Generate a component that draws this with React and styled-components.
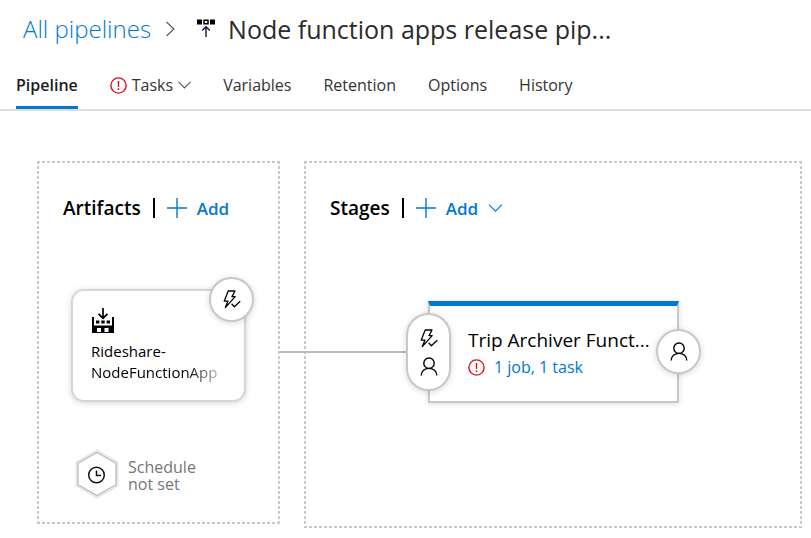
import React from "react";
import styled, { createGlobalStyle } from "styled-components";

const BLUE = "#0078d4";
const RED = "#e00b1c";
const GREY = "#c8c8c8";

const GlobalStyle = createGlobalStyle`
  *, *::before, *::after { box-sizing: border-box; }
  body {
    margin: 0;
    background: #fff;
    color: #000;
    font-family: "Open Sans", "Noto Sans", sans-serif;
    font-size: 16px;
  }
  h1, h2, h3, p { margin: 0; font-weight: 400; }
  button { font: inherit; color: inherit; background: none; border: 0; padding: 0; cursor: pointer; }
  a { color: inherit; text-decoration: none; }
  svg { display: block; flex: none; }
`;

const Breadcrumb = styled.header`
  display: flex;
  align-items: center;
  height: 57px;
  padding: 0 24px 0 23px;
  font-size: 25px;
  line-height: 36px;
  white-space: nowrap;
`;

const Crumb = styled.a`
  color: ${BLUE};
  font-size: 24px;
  font-weight: 300;
  margin-right: 15px;
`;

const Title = styled.h1`
  max-width: 400px;
  margin-left: 13px;
  overflow: hidden;
  text-overflow: ellipsis;
  font-size: 25px;
  font-weight: 400;
  color: #2b2b2b;
`;

const CrumbIcon = styled.span`
  margin-left: 22px;
`;

const Tabs = styled.nav`
  display: flex;
  gap: 32px;
  height: 54px;
  padding: 0 16px;
  border-bottom: 2px solid #dcdcdc;
`;

const Tab = styled.a`
  display: flex;
  align-items: center;
  gap: 5px;
  height: 52px;
  padding-top: 7px;
  border-bottom: 3px solid ${(p) => (p.$active ? BLUE : "transparent")};
  color: ${(p) => (p.$active ? "#1b1b1b" : "#333")};
  font-weight: ${(p) => (p.$active ? 600 : 400)};
  white-space: nowrap;
`;

const Canvas = styled.main`
  display: grid;
  grid-template-columns: 243px minmax(420px, 1fr);
  align-items: start;
  gap: 24px;
  padding: 50px 9px 11px 37px;
`;

const dashX = `repeating-linear-gradient(90deg, ${GREY} 0 3px, transparent 3px 5px)`;
const dashY = `repeating-linear-gradient(180deg, ${GREY} 0 3px, transparent 3px 5px)`;

const Panel = styled.section`
  min-width: 0;
  padding: 34px 26px 25px;
  background:
    ${dashX} top / 100% 2px no-repeat,
    ${dashX} bottom / 100% 2px no-repeat,
    ${dashY} left / 2px 100% no-repeat,
    ${dashY} right / 2px 100% no-repeat;
`;

const PanelHeader = styled.div`
  display: flex;
  align-items: center;
  height: 26px;
  white-space: nowrap;
`;

const PanelTitle = styled.h2`
  padding-right: 12px;
  font-size: 19px;
  font-weight: 600;
`;

const Divider = styled.span`
  width: 2px;
  height: 20px;
  margin-right: 12px;
  background: #000;
`;

const AddButton = styled.button`
  display: flex;
  align-items: center;
  gap: 10px;
  color: ${BLUE};
  font-weight: 600;
  font-size: 17px;
`;

const ArtifactCard = styled.article`
  position: relative;
  width: 175px;
  height: 113px;
  margin: 68px 0 0 8px;
  padding: 17px 20px 0 18px;
  border: 2px solid #d6d6d6;
  border-radius: 13px;
  background: #fff;
  box-shadow: 0 1px 6px rgba(0, 0, 0, 0.16);
`;

const ArtifactName = styled.h3`
  margin-top: 7px;
  font-size: 15px;
  line-height: 21px;
  white-space: nowrap;
`;

const Fading = styled.span`
  display: block;
  background: linear-gradient(90deg, #000 72%, #d8d8d8 100%);
  background-clip: text;
  color: transparent;
`;

const Round = styled.button`
  position: absolute;
  display: flex;
  flex-direction: column;
  align-items: center;
  justify-content: center;
  gap: 9px;
  width: 45px;
  height: 45px;
  border: 2px solid ${GREY};
  border-radius: 23px;
  background: #fff;
  box-shadow: 0 1px 6px rgba(0, 0, 0, 0.16);
`;

const TriggerButton = styled(Round)`
  top: -14px;
  right: -10px;
`;

const PostButton = styled(Round)`
  top: 23px;
  right: -24px;
`;

const PreButton = styled(Round)`
  top: 7px;
  left: -24px;
  height: 78px;
`;

const Schedule = styled.button`
  display: flex;
  align-items: center;
  gap: 9px;
  margin: 47px 0 0 12px;
  color: #767676;
  font-size: 16px;
  line-height: 17px;
  text-align: left;
`;

const ScheduleText = styled.span`
  width: 76px;
  padding-top: 3px;
`;

const StageRow = styled.div`
  display: flex;
  align-items: center;
  margin: 80px 0 100px -50px;
`;

const Connector = styled.span`
  flex: 0 0 148px;
  height: 2px;
  background: #b9b9b9;
`;

const StageCard = styled.article`
  position: relative;
  flex: 0 0 251px;
  height: 102px;
  padding: 21px 24px 0 38px;
  border: 2px solid ${GREY};
  border-top: 5px solid ${BLUE};
  background: #fff;
  box-shadow: 0 1px 6px rgba(0, 0, 0, 0.14);
`;

const StageName = styled.h3`
  font-size: 19px;
  line-height: 26px;
  overflow: hidden;
  text-overflow: ellipsis;
  white-space: nowrap;
`;

const StageTasks = styled.a`
  display: flex;
  align-items: center;
  gap: 9px;
  margin-top: 1px;
  color: ${BLUE};
  font-size: 16px;
  line-height: 26px;
`;

const Chevron = ({ color = "#555", size = 13, right }) => (
  <svg width={right ? 9 : size} height={right ? 16 : 8} fill="none" stroke={color} strokeWidth="1.1"
    viewBox={right ? "0 0 9 16" : "0 0 14 8"}>
    <path d={right ? "M.5 1L8 8L.5 15" : "M.5.7L7 7.2L13.5.7"} />
  </svg>
);

const Alert = () => (
  <svg width="17" height="17" viewBox="0 0 17 17" fill="none" stroke={RED} strokeWidth="1.4">
    <circle cx="8.5" cy="8.5" r="7.6" />
    <path d="M8.5 4v6M8.5 11.3v1.6" />
  </svg>
);

const Plus = () => (
  <svg width="20" height="20" viewBox="0 0 20 20" stroke={BLUE} strokeWidth="1.4">
    <path d="M10 0v20M0 10h20" />
  </svg>
);

const ReleaseIcon = () => (
  <svg width="18" height="19" viewBox="0 0 18 19" fill="none" stroke="#000">
    <path d="M0 .5h5v5H0zM13 .5h5v5h-5z" fill="#000" stroke="none" />
    <path d="M7 1.2h4v3.6H7z" strokeWidth="1.5" />
    <path d="M9 18V8M5.2 11.5L9 7.7l3.8 3.8" stroke="#14143c" strokeWidth="1.4" />
  </svg>
);

const BuildIcon = () => (
  <svg width="24" height="26" viewBox="0 0 24 26">
    <path d="M12 0v10M7.5 5.8L12 10.2l4.5-4.4" fill="none" stroke="#000" strokeWidth="1.7" />
    <path d="M1 9h2v8.5h18V9h2v16H1z" />
    <path d="M5 12.5h3.4v3H5zM10.3 12.5h3.4v3h-3.4zM15.6 12.5H19v3h-3.4z" />
    <path d="M6 20h4v4H6zM13.5 20h4v4h-4z" fill="#fff" />
  </svg>
);

const Bolt = () => (
  <svg width="18" height="19" viewBox="0 0 18 19" fill="none" stroke="#000" strokeWidth="1.3" strokeLinejoin="round">
    <path d="M5.2 1H12L9 6.6H12.2L2.3 17.6L4.9 11.2H1.2Z" />
    <path d="M8.6 13.8L11.4 16.8L17.2 11.3" />
  </svg>
);

const Person = () => (
  <svg width="18" height="19" viewBox="0 0 18 19" fill="none" stroke="#000" strokeWidth="1.4">
    <circle cx="9" cy="6.2" r="5.2" />
    <path d="M1.2 18.5C1.2 14.1 4.7 11.4 9 11.4s7.8 2.7 7.8 7.1" />
  </svg>
);

const HexClock = () => (
  <svg width="44" height="50" viewBox="0 0 44 50" fill="none">
    <path d="M22 2L42 13.5V36.5L22 48L2 36.5V13.5Z" fill="#fff" stroke="#e7e7e7" strokeWidth="3" />
    <path d="M22 3.5L41 14.3V35.7L22 46.5L3 35.7V14.3Z" stroke="#bdbdbd" strokeWidth="1.3" />
    <circle cx="21.5" cy="26" r="7.8" stroke="#111" strokeWidth="1.5" />
    <path d="M21.5 21.5V26.5H26" stroke="#111" strokeWidth="1.5" />
  </svg>
);

const tabs = ["Pipeline", "Tasks", "Variables", "Retention", "Options", "History"];

export default function App() {
  return (
    <>
      <GlobalStyle />
      <Breadcrumb>
        <Crumb href="#pipelines">All pipelines</Crumb>
        <Chevron right />
        <CrumbIcon><ReleaseIcon /></CrumbIcon>
        <Title>Node function apps release pip...</Title>
      </Breadcrumb>
      <Tabs>
        {tabs.map((name) => (
          <Tab key={name} href={`#${name.toLowerCase()}`} $active={name === "Pipeline"}>
            {name === "Tasks" && <Alert />}
            {name}
            {name === "Tasks" && <Chevron />}
          </Tab>
        ))}
      </Tabs>
      <Canvas>
        <Panel>
          <PanelHeader>
            <PanelTitle>Artifacts</PanelTitle>
            <Divider />
            <AddButton><Plus />Add</AddButton>
          </PanelHeader>
          <ArtifactCard>
            <BuildIcon />
            <ArtifactName>
              Rideshare-
              <Fading>NodeFunctionApp</Fading>
            </ArtifactName>
            <TriggerButton aria-label="Continuous deployment trigger"><Bolt /></TriggerButton>
          </ArtifactCard>
          <Schedule>
            <HexClock />
            <ScheduleText>Schedule not set</ScheduleText>
          </Schedule>
        </Panel>
        <Panel>
          <PanelHeader>
            <PanelTitle>Stages</PanelTitle>
            <Divider />
            <AddButton><Plus />Add<Chevron color={BLUE} size={15} /></AddButton>
          </PanelHeader>
          <StageRow>
            <Connector />
            <StageCard>
              <StageName>Trip Archiver Funct...</StageName>
              <StageTasks href="#tasks"><Alert />1 job, 1 task</StageTasks>
              <PreButton aria-label="Pre-deployment conditions"><Bolt /><Person /></PreButton>
              <PostButton aria-label="Post-deployment conditions"><Person /></PostButton>
            </StageCard>
          </StageRow>
        </Panel>
      </Canvas>
    </>
  );
}
